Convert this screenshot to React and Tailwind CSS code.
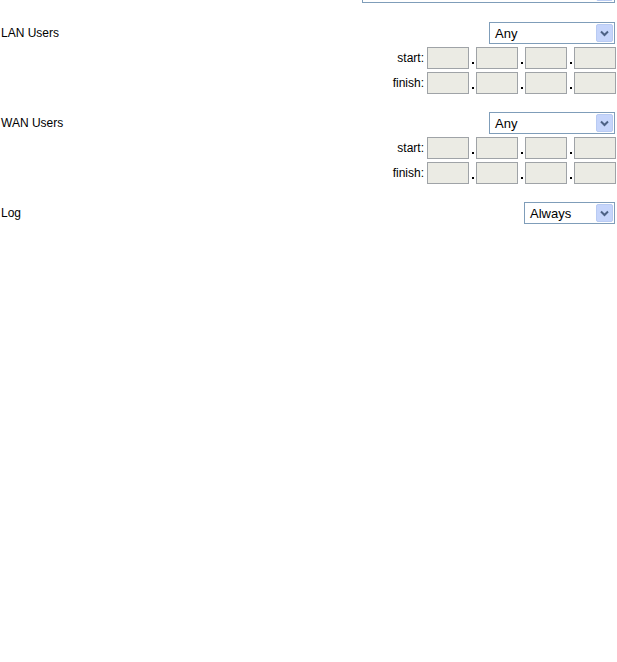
import React from "react";

function Select({ value, width }) {
  return (
    <div
      className={`flex h-[22px] items-center justify-between border border-[#7f9db9] bg-white pl-[5px] pr-[1px] ${width}`}
    >
      <span className="text-[13px] leading-none text-black">{value}</span>
      <span className="flex h-[18px] w-[17px] items-center justify-center rounded-[2px] border border-[#b9cbf3] bg-[#c6d5fb]">
        <svg width="9" height="7" viewBox="0 0 9 7">
          <path d="M1 1.5 L4.5 5 L8 1.5" fill="none" stroke="#4d6185" strokeWidth="2" />
        </svg>
      </span>
    </div>
  );
}

function IpRow({ label }) {
  return (
    <div className="flex items-center justify-end">
      <span className="mr-[3px] text-[12px]">{label}</span>
      {[0, 1, 2, 3].map((i) => (
        <React.Fragment key={i}>
          {i > 0 && (
            <span className="flex h-[22px] w-[7px] items-end justify-center pb-[5px]">
              <span className="h-[2px] w-[2px] bg-black" />
            </span>
          )}
          <div className="h-[22px] w-[42px] border border-[#9fa3a7] bg-[#ebebe4]" />
        </React.Fragment>
      ))}
    </div>
  );
}

function UserBlock({ title }) {
  return (
    <div className="flex flex-col gap-[3px]">
      <div className="flex items-center justify-between pr-[1px]">
        <span className="pl-[1px] text-[12px]">{title}</span>
        <Select value="Any" width="w-[126px]" />
      </div>
      <IpRow label="start:" />
      <IpRow label="finish:" />
    </div>
  );
}

export default function App() {
  return (
    <div className="h-[662px] w-[617px] overflow-hidden bg-white pr-[1px] font-['Liberation_Sans',Arial,sans-serif] text-black">
      <div className="mt-[-19px] flex justify-end pr-[1px]">
        <Select value="" width="w-[253px]" />
      </div>
      <div className="mt-[19px] flex flex-col gap-[18px]">
        <UserBlock title="LAN Users" />
        <UserBlock title="WAN Users" />
        <div className="flex items-center justify-between pr-[1px]">
          <span className="pl-[1px] text-[12px]">Log</span>
          <Select value="Always" width="w-[91px]" />
        </div>
      </div>
    </div>
  );
}
